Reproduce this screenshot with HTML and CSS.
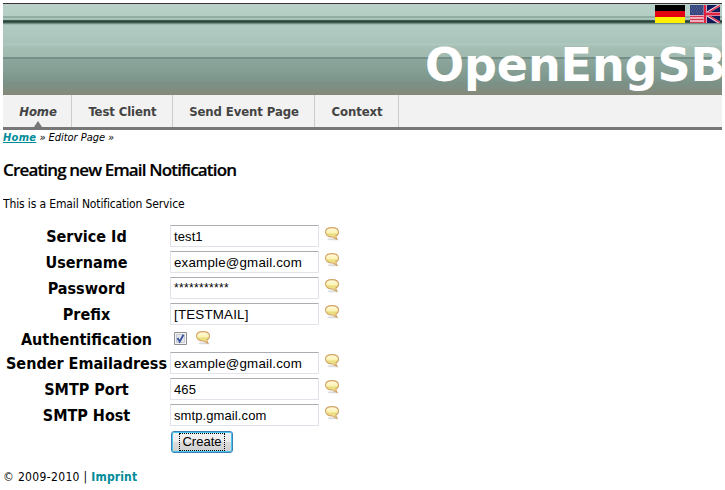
FILE: index.html
```html
<!DOCTYPE html>
<html lang="en">
<head>
<meta charset="utf-8">
<title>OpenEngSB</title>
<link rel="stylesheet" href="styles.css">
</head>
<body>
<svg class="defs" width="0" height="0">
  <defs>
    <linearGradient id="bubble" x1="0" y1="0" x2="0" y2="1"><stop offset="0" stop-color="#fffbe0"/><stop offset=".45" stop-color="#fbf3b4"/><stop offset=".55" stop-color="#eadc7c"/><stop offset="1" stop-color="#f7efa0"/></linearGradient>
    <symbol id="help" viewBox="0 0 16 16">
      <ellipse cx="9" cy="13.300" rx="5.500" ry="1" fill="#ccc" opacity=".7"/>
      <path d="M8 1.600c4 0 6.500 1.900 6.500 4.500 0 2-1.100 3.400-2.700 4l1 3.200-3.900-2.300C4.400 11.100 1.500 9.200 1.500 6.100 1.500 3.500 4 1.600 8 1.600z" fill="url(#bubble)" stroke="#d3a467" stroke-width="1.100"/>
    </symbol>
  </defs>
</svg>
<header class="banner">
  <div class="flags">
    <svg width="30" height="18" viewBox="0 0 30 18"><path fill="#000" d="M0 0h30v6H0z"/><path fill="#e3000f" d="M0 6h30v6H0z"/><path fill="#fff000" d="M0 12h30v6H0z"/></svg>
    <svg width="30" height="18" viewBox="0 0 30 18">
      <path fill="#f0dce2" d="M0 0h15v18H0z"/><path stroke="#d8324c" stroke-width="1.300" d="M0 11.500h15M0 14.500h15M0 17.400h15"/>
      <path fill="#34457f" d="M0 0h14v10H0z"/><path stroke="#7884ab" stroke-width=".7" stroke-dasharray="1 1.500" d="M1 2h12M2 4h11M1 6h12M2 8h11"/>
      <path fill="#101b5c" d="M15 0h15v18H15z"/><path stroke="#f0dce6" stroke-width="2.600" d="M15 9L30 0M15 9l15 9"/><path stroke="#df2340" stroke-width="1.300" d="M15 9.500L30 .5M15 8.500l15 9"/>
      <path fill="#d9a5bb" d="M13.500 0h3.500v18h-3.500zM14 7h16v4H14z"/><path fill="#df2340" d="M14 0h2v18h-2zM14 7.700h16v2.600H14z"/>
    </svg>
  </div>
  <h1 class="logo">OpenEngSB</h1>
</header>
<nav class="nav">
  <a class="tab home current"><span>Home</span></a>
  <a class="tab test"><span>Test Client</span></a>
  <a class="tab send"><span>Send Event Page</span></a>
  <a class="tab context"><span>Context</span></a>
</nav>
<div class="crumbs"><a>Home</a> <span>» Editor Page »</span></div>
<h2 class="title">Creating new Email Notification</h2>
<p class="intro">This is a Email Notification Service</p>
<form class="form">
  <div class="row"><label>Service Id</label><div class="field">test1</div><svg class="help"><use href="#help"/></svg></div>
  <div class="row"><label>Username</label><div class="field wide">example@gmail.com</div><svg class="help"><use href="#help"/></svg></div>
  <div class="row"><label>Password</label><div class="field secret">***********</div><svg class="help"><use href="#help"/></svg></div>
  <div class="row"><label>Prefix</label><div class="field wide">[TESTMAIL]</div><svg class="help"><use href="#help"/></svg></div>
  <div class="row checkrow"><label>Authentification</label><svg class="check" width="13" height="13" viewBox="0 0 13 13"><path d="M.5.500h12v12H.5z" fill="#f4f4f4" stroke="#8e8f8f"/><path d="M2.500 2.500h8v8h-8z" fill="#e4e7eb" stroke="#c5cad2"/><path d="M3.500 6l2.200 3.600L9.500 2.700" fill="none" stroke="#3c56a0" stroke-width="1.900"/></svg><svg class="help"><use href="#help"/></svg></div>
  <div class="row"><label>Sender Emailadress</label><div class="field wide">example@gmail.com</div><svg class="help"><use href="#help"/></svg></div>
  <div class="row"><label>SMTP Port</label><div class="field">465</div><svg class="help"><use href="#help"/></svg></div>
  <div class="row"><label>SMTP Host</label><div class="field">smtp.gmail.com</div><svg class="help"><use href="#help"/></svg></div>
  <button type="button" class="create"><span>Create</span></button>
</form>
<footer class="footer">© 2009-2010 | <a>Imprint</a></footer>
</body>
</html>
```
FILE: styles.css
```css
* { box-sizing: border-box; }
body { margin: 3px 3px 0; background: #fff; color: #000; font: 12px/16px "DejaVu Sans Condensed", "DejaVu Sans", sans-serif; font-stretch: condensed; white-space: nowrap; }
.defs { display: block; }
.banner {
  height: 92px; overflow: hidden; border-top: 1px solid #3a3038;
  background: linear-gradient(#b9d1c8 0, #b4cec4 12px, #91aea4 12px, #91aea4 14px, #afc9c0 14px, #a2bbb1 16px, #536f64 16px, #2a473c 17px, #2a473c 18px, #536f64 19px, #91aaa1 20px, #b1cac1 21px, #aec8bf 30px, #a8c3b9 39px, #b0cac1 40px, #a5beb4 43px, #a1bab0 53px, #758f86 53px, #758f86 55px, #8ba69c 55px, #859f95 66px, #7f998f 73px, #7b9187 79px, #848b7c 89px, #858878 91px);
}
.flags { display: flex; justify-content: flex-end; gap: 5px; height: 19px; padding: 1px 2px 0 0; }
.flags svg { display: block; }
.logo { margin: 14px 0 0 422px; color: #fff; font: bold 46px/56px "DejaVu Sans", sans-serif; font-stretch: normal; letter-spacing: -.1px; }
.nav { display: flex; height: 35px; background: #f2f2f2; border-bottom: 3px solid #777; }
.tab { display: block; height: 32px; padding: 9px 0 0 1px; border-right: 1px solid #ccc; color: #444; font-size: 13px; font-weight: bold; text-align: center; letter-spacing: -.1px; }
.home { width: 69px; padding-left: 2px; }
.test { width: 101px; }
.send { width: 142px; }
.context { width: 84px; }
.current { position: relative; font-style: italic; }
.current::after { content: ""; position: absolute; left: 31px; bottom: 0; border: 4px solid transparent; border-bottom: 6px solid #777; border-top: 0; }
.crumbs { height: 14px; padding-top: 1px; font-size: 11px; line-height: 14px; font-style: italic; letter-spacing: -.04px; }
.crumbs a, .footer a { color: #008b99; font-weight: bold; }
.crumbs a { text-decoration: underline; letter-spacing: .3px; }
.title { margin: 16px 0 0; height: 20px; font: 600 17px/20px "Open Sans", sans-serif; letter-spacing: -.84px; -webkit-text-stroke: .2px #000; }
.intro { margin: 16px 0 0; height: 16px; letter-spacing: -.13px; }
.form { margin-top: 11px; }
.row { display: grid; grid-template-columns: 167px 154px 16px; height: 26px; align-items: start; }
.row label { padding-top: 1px; text-align: center; font-size: 16px; font-weight: bold; line-height: 26px; }
.field { width: 149px; height: 22px; margin-top: 2px; padding-left: 3px; border: 1px solid #e2e3ea; border-top-color: #abadb3; border-radius: 1px; font: 13px/21px "Liberation Sans", sans-serif; letter-spacing: .1px; }
.wide { font-size: 13.333px; letter-spacing: .2px; }
.secret { font-size: 12px; letter-spacing: .34px; line-height: 20px; }
.help { width: 16px; height: 16px; margin-top: 3px; }
.checkrow { grid-template-columns: 171px 21px 16px; height: 23px; }
.checkrow label { width: 167px; line-height: 24px; }
.check { margin-top: 5px; }
.create { display: block; width: 62px; height: 22px; margin: 3px 0 0 168px; padding: 1px; border: 1px solid #3c7fb1; border-radius: 3px; background: linear-gradient(#f2f2f2 0, #ebebeb 50%, #dcdcdc 50%, #cfcfcf); box-shadow: inset 0 0 0 1px #48c8f0; font: 13px/16px "Liberation Sans", sans-serif; }
.create span { display: block; width: 46px; height: 18px; margin: 0 auto; border: 1px dotted #000; }
.footer { margin-top: 16px; height: 16px; letter-spacing: .34px; }
.footer a { letter-spacing: .15px; }
```
